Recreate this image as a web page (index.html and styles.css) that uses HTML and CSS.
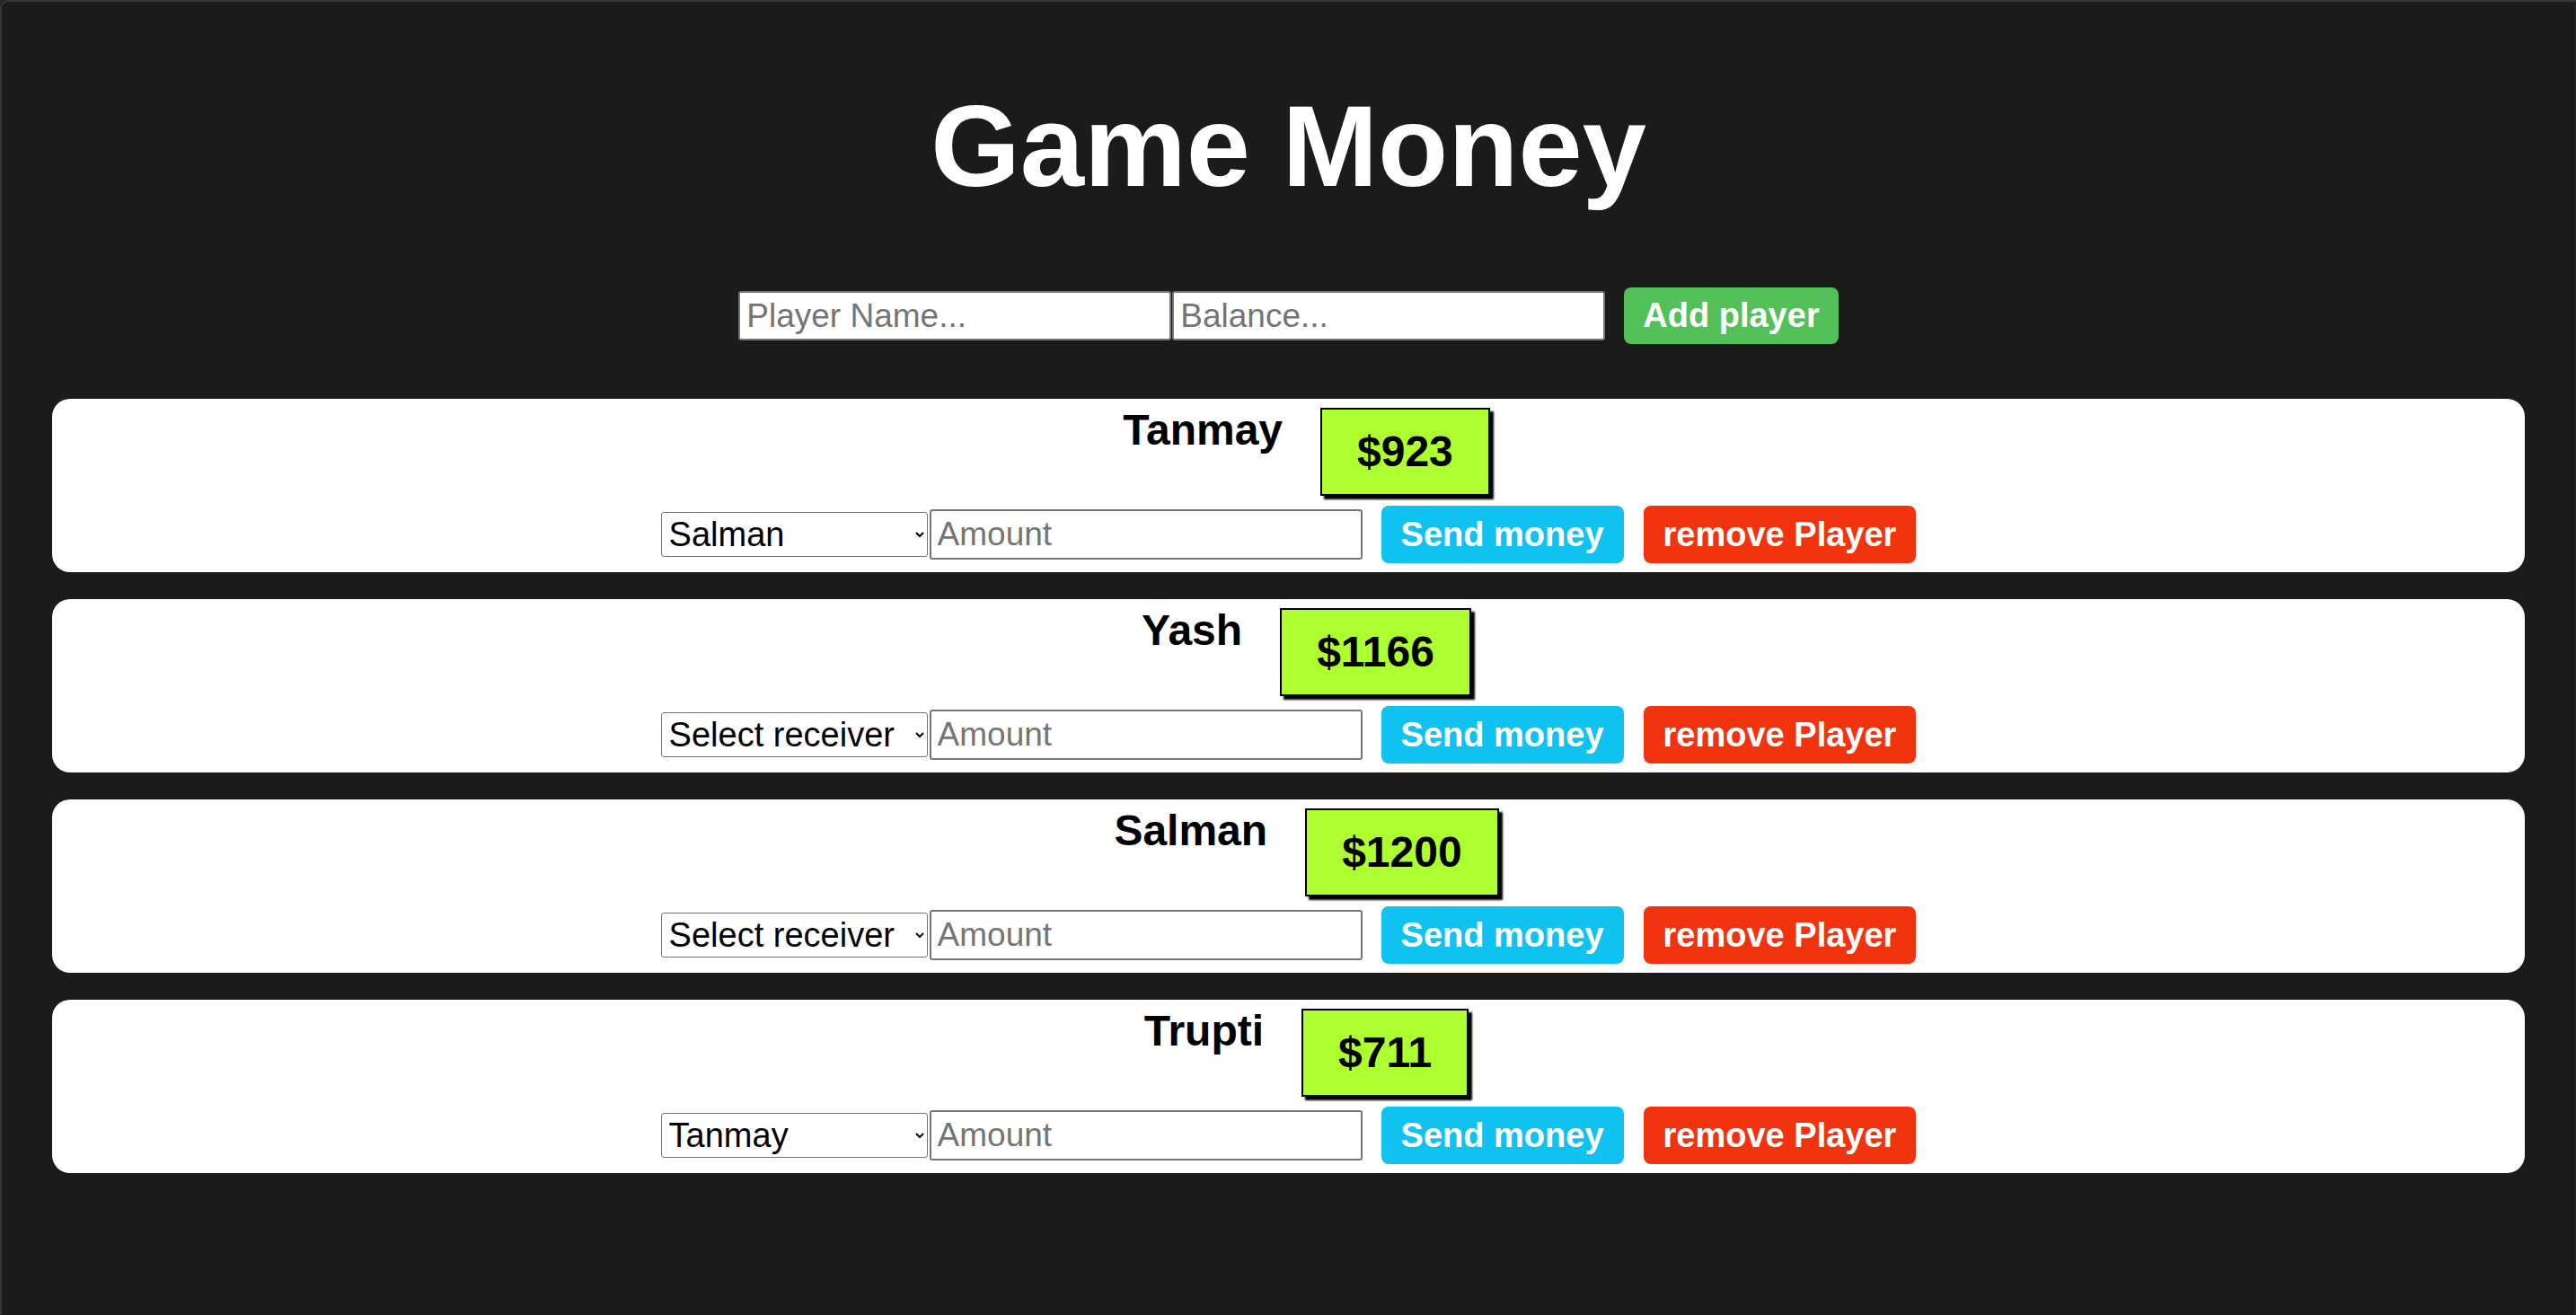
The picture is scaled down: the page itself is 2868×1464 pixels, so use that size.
FILE: index.html
```html
<!DOCTYPE html>
<html lang="en">
<head>
<meta charset="utf-8">
<title>Game Money</title>
<link rel="stylesheet" href="styles.css">
</head>
<body>
<main class="app">
  <h1 class="title">Game Money</h1>
  <div class="add-row">
    <input class="field field-wide" type="text" placeholder="Player Name..."><input class="field field-wide field-next" type="number" placeholder="Balance..."><button class="btn btn-add">Add player</button>
  </div>
  <section class="players">
    <div class="card">
      <div class="card-head"><h2 class="name">Tanmay</h2><div class="balance">$923</div></div>
      <div class="card-actions"><select class="receiver"><option>Salman</option></select><input class="field amount" type="number" placeholder="Amount"><button class="btn btn-send">Send money</button><button class="btn btn-remove">remove Player</button></div>
    </div>
    <div class="card">
      <div class="card-head"><h2 class="name">Yash</h2><div class="balance">$1166</div></div>
      <div class="card-actions"><select class="receiver"><option>Select receiver</option></select><input class="field amount" type="number" placeholder="Amount"><button class="btn btn-send">Send money</button><button class="btn btn-remove">remove Player</button></div>
    </div>
    <div class="card">
      <div class="card-head"><h2 class="name">Salman</h2><div class="balance">$1200</div></div>
      <div class="card-actions"><select class="receiver"><option>Select receiver</option></select><input class="field amount" type="number" placeholder="Amount"><button class="btn btn-send">Send money</button><button class="btn btn-remove">remove Player</button></div>
    </div>
    <div class="card">
      <div class="card-head"><h2 class="name">Trupti</h2><div class="balance">$711</div></div>
      <div class="card-actions"><select class="receiver"><option>Tanmay</option></select><input class="field amount" type="number" placeholder="Amount"><button class="btn btn-send">Send money</button><button class="btn btn-remove">remove Player</button></div>
    </div>
  </section>
</main>
</body>
</html>
```
FILE: styles.css
```css
html {
  background: #262626;
}
body {
  margin: 0;
  height: 100vh;
  overflow: hidden;
  box-sizing: border-box;
  background: #1b1b1b;
  border-top: 2px solid #353535;
  border-left: 2px solid #353535;
  border-right: 1px solid #2a2a2a;
  border-top-left-radius: 10px;
  font-family: "Liberation Sans", Arial, sans-serif;
}
.app {
  display: flex;
  flex-direction: column;
}
.title {
  margin: 87px 0 0;
  text-align: center;
  color: #fff;
  font-size: 128px;
  font-weight: 700;
  line-height: normal;
}
.add-row {
  display: flex;
  justify-content: center;
  align-items: center;
  height: 63px;
  margin-top: 84px;
}
.field {
  box-sizing: border-box;
  font-family: "Liberation Sans", Arial, sans-serif;
  font-size: 37px;
  color: #000;
  background: #fff;
  border: 2px solid #767676;
  border-radius: 3px;
  padding: 0 7px;
  margin: 0;
  outline: none;
  -moz-appearance: textfield;
}
.field::-webkit-outer-spin-button,
.field::-webkit-inner-spin-button {
  -webkit-appearance: none;
  margin: 0;
}
.field::placeholder {
  color: #757575;
}
.field-wide {
  width: 482px;
  height: 55px;
}
.field-next {
  margin-left: 1px;
}
.btn {
  font-family: "Liberation Sans", Arial, sans-serif;
  font-size: 38px;
  font-weight: 700;
  color: #fff;
  border: none;
  border-radius: 8px;
  padding: 0 22px;
  height: 64px;
  line-height: normal;
  cursor: pointer;
}
.btn-add {
  height: 63px;
  padding: 0 21px;
  margin-left: 21px;
  background: #54c05a;
}
.players {
  display: flex;
  flex-direction: column;
  gap: 30px;
  margin: 61px 56px 0;
}
.card {
  background: #fff;
  border-radius: 20px;
  padding: 10px;
}
.card-head {
  display: flex;
  justify-content: center;
  align-items: flex-start;
  gap: 42px;
  padding-left: 40px;
}
.name {
  margin: -3px 0 0;
  font-size: 48px;
  font-weight: 700;
  line-height: normal;
  color: #000;
}
.balance {
  font-size: 48px;
  font-weight: 700;
  line-height: 56px;
  color: #000;
  background: #adff2f;
  border: 2px solid #000;
  box-shadow: 4px 4px 2px #000;
  padding: 19px 39px;
}
.card-actions {
  display: flex;
  justify-content: center;
  align-items: center;
  height: 64px;
  margin-top: 11px;
}
.receiver {
  box-sizing: border-box;
  width: 297px;
  height: 50px;
  font-family: "Liberation Sans", Arial, sans-serif;
  font-size: 38px;
  color: #000;
  background: #fff;
  border: 1px solid #767676;
  border-radius: 3px;
  padding-left: 4px;
  margin: 0;
}
.amount {
  width: 482px;
  height: 56px;
  margin-left: 2px;
}
.btn-send {
  margin-left: 21px;
  background: #10c2f0;
}
.btn-remove {
  margin-left: 22px;
  background: #f2330f;
}
```
